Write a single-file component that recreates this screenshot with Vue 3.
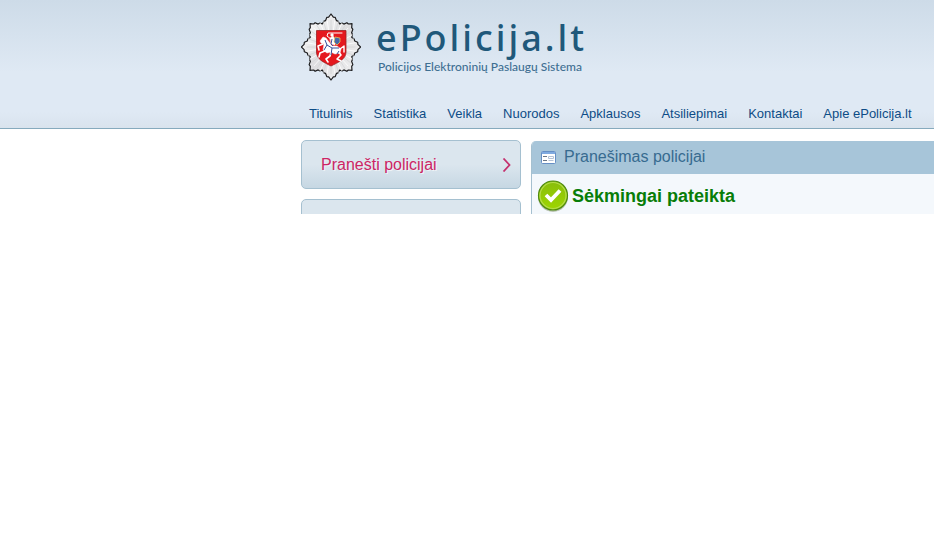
<script setup>
import { ref } from "vue";

const menu = [
  "Titulinis",
  "Statistika",
  "Veikla",
  "Nuorodos",
  "Apklausos",
  "Atsiliepimai",
  "Kontaktai",
  "Apie ePolicija.lt",
];

const message = ref("Sėkmingai pateikta");

// point on the emblem, the star is a bit taller than wide
const point = (radius, deg) => {
  const a = (deg * Math.PI) / 180;
  return [30 + Math.sin(a) * radius * 0.9, 34 - Math.cos(a) * radius];
};

// eight groups of rays, longest in the middle
const profile = [
  [0, 33],
  [5, 30],
  [9, 30],
  [13, 27],
  [17, 27],
  [22.5, 25],
  [28, 27],
  [32, 27],
  [36, 30],
  [40, 30],
];

const star = [];
for (let i = 0; i < 8; i++) {
  for (const [deg, radius] of profile) {
    star.push(point(radius, i * 45 + deg).join(","));
  }
}

const rays = [];
for (let deg = 0; deg < 360; deg += 9) {
  const [x1, y1] = point(14, deg);
  const [x2, y2] = point(27, deg);
  rays.push({ x1, y1, x2, y2 });
}
</script>

<template>
  <header class="header">
    <div class="inner">
      <a href="#" class="brand">
        <svg class="emblem" viewBox="0 0 60 68" aria-hidden="true">
          <defs>
            <linearGradient id="silver" x1="0" y1="0" x2="1" y2="1">
              <stop offset="0" stop-color="#ffffff" />
              <stop offset="0.5" stop-color="#dedee0" />
              <stop offset="1" stop-color="#f4f4f5" />
            </linearGradient>
          </defs>
          <polygon
            :points="star.join(' ')"
            fill="url(#silver)"
            stroke="#1d1d1f"
            stroke-width="1.2"
            stroke-linejoin="round"
          />
          <line
            v-for="(ray, i) in rays"
            :key="i"
            v-bind="ray"
            :stroke="i % 2 ? '#ffffff' : '#d3d4d6'"
            stroke-width="0.8"
          />
          <path
            d="M15.500 17.500H45V39C45 46 38 49 30 53C22 49 15.500 46 15.500 39Z"
            fill="#e5181e"
            stroke="#9a2224"
            stroke-width="0.8"
          />
          <g fill="#fff" stroke="#fff" stroke-linejoin="round" stroke-linecap="round">
            <path d="M20 30L19 28L22 24L25 25L28 29L31 33L36 33L40 36L39 40L34 41L30 39L26 40L22 37L23 31Z" stroke-width="0.5" />
            <path d="M22 31L17 33L18 37M24 38L19 40L18 44" fill="none" stroke-width="1.6" />
            <path d="M30 39L29 43L25 46L27 49" fill="none" stroke-width="1.6" />
            <path d="M37 38L40 42L36 46L40 48" fill="none" stroke-width="1.6" />
            <path d="M39 36L43 33L43 39" fill="none" stroke-width="1.4" />
            <path d="M29 25L32 23L34 26L34 32L30 31Z" stroke-width="0.5" />
            <path d="M30 26L26 23L27 20L41 20" fill="none" stroke-width="1" />
            <circle cx="31" cy="22" r="1.7" stroke="none" />
          </g>
          <path d="M34 24L39 25L39 29L36 32L33 29Z" fill="#4968a8" stroke="#ecd05a" stroke-width="0.7" />
          <path
            d="M24 27L26 32L23 37M26 32L31 35L38 35M31 35L30 42M31 26L30 31L32 33M36 41L38 38"
            fill="none"
            stroke="#364f9b"
            stroke-width="1"
          />
        </svg>
        <span class="titles">
          <span class="name">ePolicija.lt</span>
          <span class="tagline">Policijos Elektroninių Paslaugų Sistema</span>
        </span>
      </a>
      <nav class="menu">
        <a v-for="item in menu" :key="item" href="#">{{ item }}</a>
      </nav>
    </div>
  </header>

  <div class="content">
    <aside class="side">
      <a href="#" class="side-link">
        <span>Pranešti policijai</span>
        <svg class="arrow" viewBox="0 0 9 14" aria-hidden="true">
          <path d="M1.500 0.500L7.500 7L1.500 13.500" fill="none" stroke="#c4316e" stroke-width="1.800" />
        </svg>
      </a>
      <div class="side-link"></div>
    </aside>

    <main class="panel">
      <h1 class="panel-title">
        <svg class="form-icon" viewBox="0 0 15 13" aria-hidden="true">
          <rect x="0.5" y="0.5" width="14" height="12" rx="1" fill="#fff" stroke="#668fc5" />
          <path d="M1 2H14" stroke="#7faae0" stroke-width="2" />
          <path d="M2 5.5H6M2 9.5H6" stroke="#6b7787" />
          <path d="M7.500 5.500H12.500V7.500H7.500ZM7.500 9.500H12.500" fill="#fff" stroke="#b4c2d6" />
        </svg>
        Pranešimas policijai
      </h1>
      <p class="success">
        <svg class="check" viewBox="0 0 32 32" aria-hidden="true">
          <defs>
            <linearGradient id="green" x1="0" y1="0" x2="0" y2="1">
              <stop offset="0" stop-color="#88bd0c" />
              <stop offset="1" stop-color="#9ed600" />
            </linearGradient>
          </defs>
          <circle cx="16" cy="17" r="15" fill="#b9c3b2" />
          <circle cx="16" cy="15.500" r="14.500" fill="url(#green)" stroke="#4f8a10" stroke-width="1.2" />
          <circle cx="16" cy="15.500" r="13" fill="none" stroke="#b5dc4c" stroke-width="1.2" />
          <path d="M9 15L14 20L23 10.500" fill="none" stroke="#fff" stroke-width="3.800" />
        </svg>
        {{ message }}
      </p>
    </main>
  </div>
</template>

<style>
body {
  margin: 0;
  background: #fff;
}
</style>

<style scoped>
.header {
  font-family: "Liberation Sans", Arial, sans-serif;
  background: linear-gradient(#cddbe8 0, #dfe9f4 72px, #dfe9f4 112px, #d9e3ed 128px);
  border-bottom: 1px solid #86aabd;
}

.inner {
  margin-left: 301px;
  padding-top: 13px;
}

.brand {
  display: flex;
  gap: 15px;
  height: 68px;
  text-decoration: none;
}

.emblem {
  width: 60px;
  height: 68px;
}

.titles {
  display: flex;
  flex-direction: column;
  white-space: nowrap;
}

.name {
  padding-top: 3px;
  font-family: "Trebuchet MS", "Noto Sans", sans-serif;
  font-size: 36px;
  line-height: 44px;
  font-weight: 500;
  letter-spacing: 3px;
  color: #20587a;
}

.tagline {
  padding-left: 2px;
  font-family: "Trebuchet MS", Lato, sans-serif;
  font-size: 12px;
  line-height: 14px;
  font-weight: 500;
  color: #3f6f92;
}

.menu {
  display: flex;
  gap: 21px;
  padding: 25px 8px 6px;
  font-size: 13px;
  line-height: 16px;
  white-space: nowrap;
}

.menu a {
  color: #0d4c86;
  text-decoration: none;
}

.content {
  display: flex;
  gap: 10px;
  max-height: 74px;
  margin-left: 301px;
  padding-top: 11px;
  overflow: hidden;
  font-family: "Liberation Sans", Arial, sans-serif;
}

.side {
  display: flex;
  flex: 0 0 220px;
  flex-direction: column;
  gap: 10px;
}

.side-link {
  display: flex;
  flex: none;
  align-items: center;
  justify-content: space-between;
  box-sizing: border-box;
  min-height: 49px;
  padding: 0 9px 0 19px;
  border: 1px solid #a5c0d0;
  border-radius: 5px;
  background: linear-gradient(#dbe6ee 50%, #c6d7e3);
  color: #cd2564;
  font-size: 16px;
  text-decoration: none;
  text-shadow: 1px 1px 0 #eef3f7;
}

.arrow {
  width: 9px;
  height: 14px;
}

.panel {
  flex: 1;
  min-width: 0;
  margin-top: 1px;
  border-left: 1px solid #a5c0d0;
  border-radius: 5px 0 0 0;
  background: #f4f8fc;
  overflow: hidden;
}

.panel-title {
  display: flex;
  align-items: center;
  gap: 8px;
  margin: 0;
  padding: 0 9px 1px;
  background: #a7c5d9;
  color: #376b90;
  font-size: 16px;
  font-weight: normal;
  line-height: 32px;
}

.form-icon {
  width: 15px;
  height: 13px;
}

.success {
  display: flex;
  align-items: center;
  gap: 3px;
  margin: 0;
  padding: 5px;
  color: #087d08;
  font-size: 18px;
  font-weight: bold;
  line-height: 34px;
}

.check {
  width: 32px;
  height: 32px;
}
</style>
